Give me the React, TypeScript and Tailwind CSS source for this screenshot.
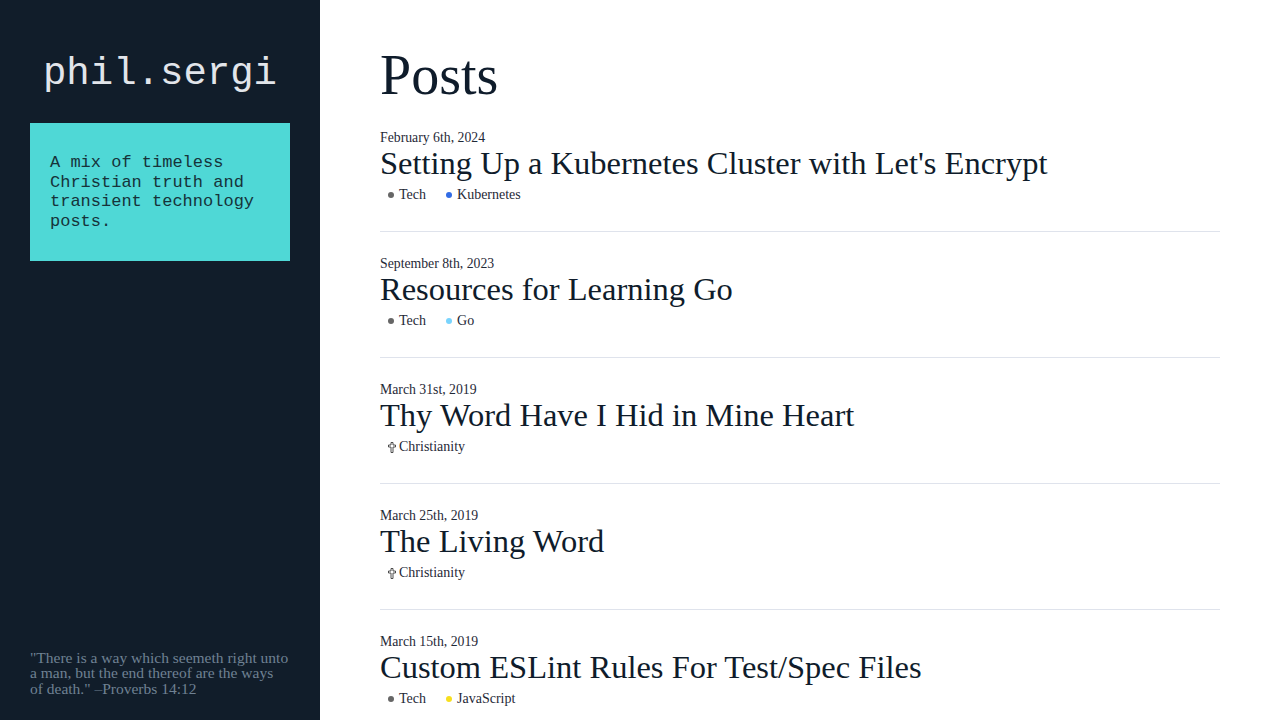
const posts = [
  {
    date: 'February 6th, 2024',
    title: "Setting Up a Kubernetes Cluster with Let's Encrypt",
    tags: [
      { label: 'Tech', dot: 'bg-[#666666]' },
      { label: 'Kubernetes', dot: 'bg-[#326ce5]' },
    ],
  },
  {
    date: 'September 8th, 2023',
    title: 'Resources for Learning Go',
    tags: [
      { label: 'Tech', dot: 'bg-[#666666]' },
      { label: 'Go', dot: 'bg-[#79d4fd]' },
    ],
  },
  {
    date: 'March 31st, 2019',
    title: 'Thy Word Have I Hid in Mine Heart',
    tags: [{ label: 'Christianity', cross: true }],
  },
  {
    date: 'March 25th, 2019',
    title: 'The Living Word',
    tags: [{ label: 'Christianity', cross: true }],
  },
  {
    date: 'March 15th, 2019',
    title: 'Custom ESLint Rules For Test/Spec Files',
    tags: [
      { label: 'Tech', dot: 'bg-[#666666]' },
      { label: 'JavaScript', dot: 'bg-[#f7df1e]' },
    ],
  },
];

type Tag = { label: string; dot?: string; cross?: boolean };

const serif = { fontFamily: '"Liberation Serif", "DejaVu Serif", serif' };
const mono = { fontFamily: '"Liberation Mono", monospace' };

function CrossIcon() {
  return (
    <svg width="8" height="11" viewBox="0 0 8 11" className="shrink-0">
      <path
        d="M3 0.5h2v2.5h2.5v2h-2.5v5.5h-2v-5.5h-2.5v-2h2.5z"
        fill="none"
        stroke="#3a3a3a"
        strokeWidth="0.9"
        strokeLinejoin="round"
      />
    </svg>
  );
}

function TagItem({ tag }: { tag: Tag }) {
  if (tag.cross) {
    return (
      <span className="inline-flex items-center gap-[3px] pl-2">
        <CrossIcon />
        <span>{tag.label}</span>
      </span>
    );
  }
  return (
    <span className="inline-flex items-center gap-[5px] pl-2">
      <span className={`w-[6px] h-[6px] rounded-full ${tag.dot}`} />
      <span>{tag.label}</span>
    </span>
  );
}

export default function App() {
  return (
    <div className="flex min-h-screen bg-white" style={serif}>
      {/* Sidebar */}
      <aside className="w-[320px] shrink-0 h-screen sticky top-0 bg-[#111d2a] flex flex-col px-[30px] pt-[52px] pb-[24px]">
        <h1 className="text-center text-[39px] leading-[44px] text-[#e2e5ea]" style={mono}>
          phil.sergi
        </h1>
        <div
          className="mt-[27px] bg-[#4fd8d6] px-5 py-[30px] text-[17px] leading-[19.5px] text-[#16333a]"
          style={mono}
        >
          A mix of timeless Christian truth and transient technology posts.
        </div>
        <p className="mt-auto text-[15.5px] leading-[15.5px] text-[#6f8193] whitespace-nowrap">
          "There is a way which seemeth right unto
          <br />
          a man, but the end thereof are the ways
          <br />
          of death." –Proverbs 14:12
        </p>
      </aside>

      {/* Main */}
      <main className="flex-1 px-[60px] pt-[44px]">
        <h2 className="text-[56px] leading-[62px] text-[#0f1c2b]">Posts</h2>
        <div>
          {posts.map((post) => (
            <article key={post.title} className="pt-6 pb-[26px] border-b border-[#dfe3ec]">
              <div className="text-[13.75px] leading-4 text-[#1f2937]">{post.date}</div>
              <h3 className="text-[32.5px] leading-[34px] text-[#0f1c2b]">{post.title}</h3>
              <div className="mt-[5px] flex gap-3 text-[14px] leading-5 text-[#1f2937]">
                {post.tags.map((t) => (
                  <TagItem key={t.label} tag={t} />
                ))}
              </div>
            </article>
          ))}
        </div>
      </main>
    </div>
  );
}
